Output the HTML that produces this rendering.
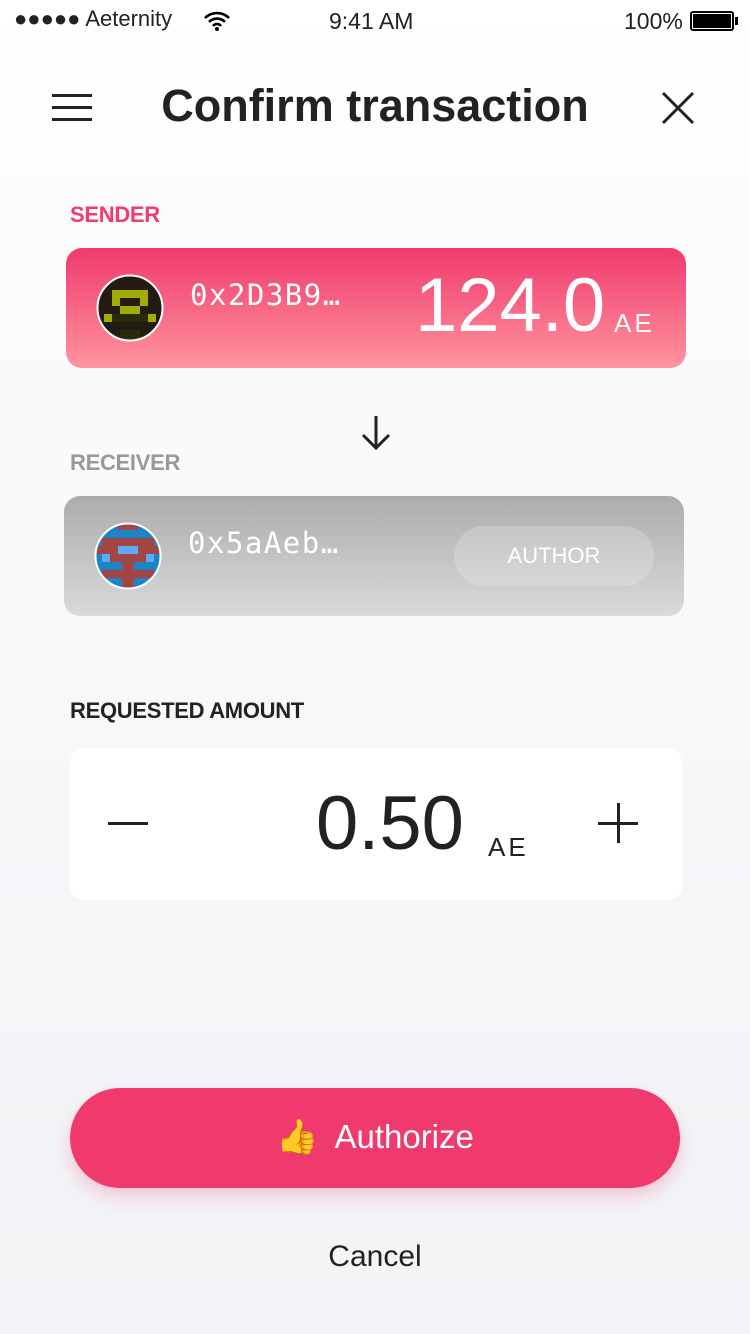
<!DOCTYPE html>
<html><head><meta charset="utf-8"><style>
*{margin:0;padding:0;box-sizing:border-box}
body{width:750px;height:1334px;overflow:hidden;font-family:"Liberation Sans",sans-serif;background:linear-gradient(#fff 0,#fafbfc 300px,#f1f3f6 1334px);position:relative;color:#222}
.abs{position:absolute}
.lbl{font-size:22px;font-weight:bold;letter-spacing:-0.3px}
.mono{font-family:"DejaVu Sans Mono","Liberation Mono",monospace;color:#fff;font-size:29px;letter-spacing:1.5px}
</style></head><body>
<div class="abs" style="left:14px;top:6px;font-size:22px">●●●●● Aeternity</div>
<svg class="abs" style="left:203px;top:10px" width="28" height="22" viewBox="0 0 28 22"><path d="M2 8a17 17 0 0 1 24 0M6 12a11 11 0 0 1 16 0M10 16a5 5 0 0 1 8 0" stroke="#000" stroke-width="2.6" fill="none"/><circle cx="14" cy="19" r="2" fill="#000"/></svg>
<div class="abs" style="left:329px;top:8px;font-size:23px">9:41 AM</div>
<div class="abs" style="left:624px;top:8px;font-size:23px">100%</div>
<div class="abs" style="left:690px;top:11px;width:44px;height:20px;border:2px solid #000;border-radius:3px;padding:1px"><div style="background:#000;height:100%"></div></div>
<div class="abs" style="left:735px;top:17px;width:3px;height:8px;background:#000"></div>
<div class="abs" style="left:52px;top:94px;width:40px;height:3px;background:#222;box-shadow:0 12px 0 #222,0 24px 0 #222"></div>
<div class="abs" style="left:0;width:750px;top:80px;text-align:center;font-size:45px;font-weight:bold;color:#222">Confirm transaction</div>
<svg class="abs" style="left:660px;top:90px" width="36" height="36"><path d="M3 3L33 33M33 3L3 33" stroke="#222" stroke-width="3"/></svg>
<div class="abs lbl" style="left:70px;top:202px;color:#f03c6e">SENDER</div>
<div class="abs" style="left:66px;top:248px;width:620px;height:120px;border-radius:16px;background:linear-gradient(#f03a6d,#ff949e)"></div>
<svg class="abs" style="left:96px;top:274px" width="68" height="68" viewBox="0 0 68 68"><clipPath id="c1"><circle cx="34" cy="34" r="32"/></clipPath><g clip-path="url(#c1)"><rect width="68" height="68" fill="#231a10"/><rect x="16" y="16" width="36" height="8" fill="#a3ad00"/><rect x="16" y="24" width="8" height="8" fill="#a3ad00"/><rect x="44" y="24" width="8" height="8" fill="#a3ad00"/><rect x="24" y="32" width="20" height="8" fill="#a3ad00"/><rect x="8" y="40" width="8" height="8" fill="#a3ad00"/><rect x="52" y="40" width="8" height="8" fill="#a3ad00"/><rect x="16" y="40" width="36" height="8" fill="#262c0c"/><rect x="24" y="56" width="20" height="12" fill="#262c0c"/></g><circle cx="34" cy="34" r="32.5" fill="none" stroke="#fff" stroke-width="2"/></svg>
<div class="abs mono" style="left:190px;top:278px">0x2D3B9…</div>
<div class="abs" style="left:415px;top:262px;font-size:76px;color:#fff;font-weight:300">124.0</div>
<div class="abs" style="left:614px;top:308px;font-size:26px;color:#fff;letter-spacing:3px">AE</div>
<svg class="abs" style="left:358px;top:414px" width="36" height="38"><path d="M18 2V34M5 21L18 34L31 21" stroke="#222" stroke-width="3" fill="none"/></svg>
<div class="abs lbl" style="left:70px;top:450px;color:#999">RECEIVER</div>
<div class="abs" style="left:64px;top:496px;width:620px;height:120px;border-radius:16px;background:linear-gradient(#acacac,#dadada)"></div>
<svg class="abs" style="left:94px;top:522px" width="68" height="68" viewBox="0 0 68 68"><clipPath id="c2"><circle cx="34" cy="34" r="32"/></clipPath><g clip-path="url(#c2)"><rect width="68" height="68" fill="#1e84c6"/><rect x="24" y="0" width="20" height="8" fill="#a24545"/><rect x="8" y="16" width="52" height="8" fill="#a24545"/><rect x="0" y="24" width="68" height="8" fill="#a24545"/><rect x="24" y="24" width="20" height="8" fill="#5aacff"/><rect x="16" y="32" width="36" height="8" fill="#a24545"/><rect x="8" y="32" width="8" height="8" fill="#5aacff"/><rect x="52" y="32" width="8" height="8" fill="#5aacff"/><rect x="28" y="32" width="12" height="36" fill="#a24545"/><rect x="8" y="48" width="52" height="8" fill="#a24545"/></g><circle cx="34" cy="34" r="32.5" fill="none" stroke="#fff" stroke-width="2"/></svg>
<div class="abs mono" style="left:188px;top:526px">0x5aAeb…</div>
<div class="abs" style="left:454px;top:526px;width:200px;height:60px;border-radius:30px;background:rgba(255,255,255,0.2);color:#fff;font-size:22px;text-align:center;line-height:60px">AUTHOR</div>
<div class="abs lbl" style="left:70px;top:698px;color:#222">REQUESTED AMOUNT</div>
<div class="abs" style="left:70px;top:748px;width:612px;height:152px;border-radius:14px;background:#fff"></div>
<div class="abs" style="left:108px;top:822px;width:40px;height:3px;background:#222"></div>
<div class="abs" style="left:598px;top:822px;width:40px;height:3px;background:#222"></div>
<div class="abs" style="left:617px;top:803px;width:3px;height:40px;background:#222"></div>
<div class="abs" style="left:316px;top:780px;font-size:76px;font-weight:300;color:#222">0.50</div>
<div class="abs" style="left:488px;top:832px;font-size:26px;letter-spacing:3px;color:#222">AE</div>
<div class="abs" style="left:70px;top:1088px;width:610px;height:100px;border-radius:50px;background:#f03a6e;box-shadow:0 8px 18px rgba(240,58,110,0.25);text-align:center;line-height:98px;color:#fff;font-size:33px;font-weight:500"><span style="font-size:34px;margin-right:16px">👍</span>Authorize</div>
<div class="abs" style="left:0;width:750px;top:1240px;text-align:center;font-size:30px;color:#222">Cancel</div>
</body></html>
